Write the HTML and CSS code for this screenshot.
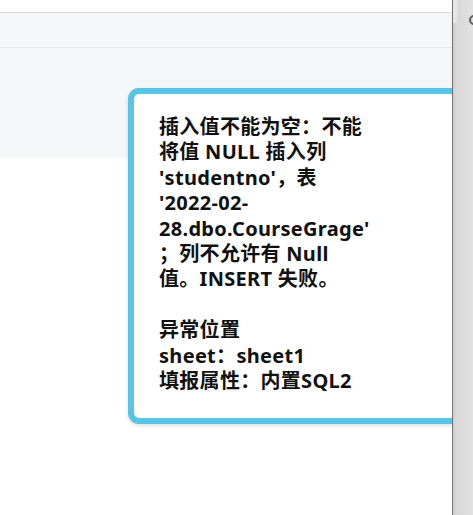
FILE: index.html
```html
<!DOCTYPE html>
<html lang="zh-CN">
<head>
  <meta charset="UTF-8" />
  <meta name="viewport" content="width=device-width, initial-scale=1.0" />
  <title>填报异常</title>
  <link rel="stylesheet" href="styles.css">
</head>
<body>
  <div class="page">
    <div class="main">
      <div class="topbar"></div>
      <div class="toolbar"></div>
      <div class="header"></div>
      <div class="content"></div>

      <div class="tip">
        <p>插入值不能为空：不能<br>将值 NULL 插入列<br>'studentno'，表<br>'2022-02-<br>28.dbo.CourseGrage'<br>；列不允许有 Null<br>值。INSERT 失败。</p>
        <p>异常位置<br>sheet：sheet1<br>填报属性：内置SQL2</p>
      </div>
    </div>

    <div class="side">
      <div class="thumb"></div>
      <span class="side-icon"></span>
    </div>
  </div>
</body>
</html>
```

FILE: styles.css
```css
html, body { margin: 0; padding: 0; }
body { font-family: "Noto Sans", "Noto Sans CJK SC", sans-serif; background: white; }

.page { display: flex; height: 515px; }

.main {
  position: relative;
  width: 452px;
  overflow: hidden;
  display: flex;
  flex-direction: column;
}
.topbar { height: 12px; background: white; border-bottom: 1px solid #dcdcdc; }
.toolbar { height: 34px; background: #f5f6f8; border-bottom: 1px solid #e6e7ea; }
.header { height: 110px; background: #f5f6f8; }
.content { flex: 1; background: white; }

.side {
  position: relative;
  flex: 1;
  border-left: 1px solid #707070;
  background: linear-gradient(to right, #cfcfcf 0, #d8d8d8 4px, #e2e2e2 100%);
}
.thumb { width: 4px; height: 23px; background: #e6e6e6; }
.side-icon {
  position: absolute;
  top: 15px;
  left: 16px;
  width: 6px;
  height: 6px;
  border: 2px solid #606060;
  border-radius: 50%;
}

.tip {
  position: absolute;
  top: 88px;
  left: 128px;
  width: 360px;
  height: 336px;
  box-sizing: border-box;
  padding: 20px 25px 24px;
  background: white;
  border: 6px solid #56c5e6;
  border-radius: 11px;
  box-shadow: 0 2px 4px rgba(0, 0, 0, 0.12);
  font-size: 20px;
  font-weight: bold;
  letter-spacing: 0.3px;
  line-height: 25.4px;
  color: #111;
  white-space: nowrap;
}
.tip p { margin: 0 0 25.4px; }
.tip p:last-child { margin-bottom: 0; }
```
